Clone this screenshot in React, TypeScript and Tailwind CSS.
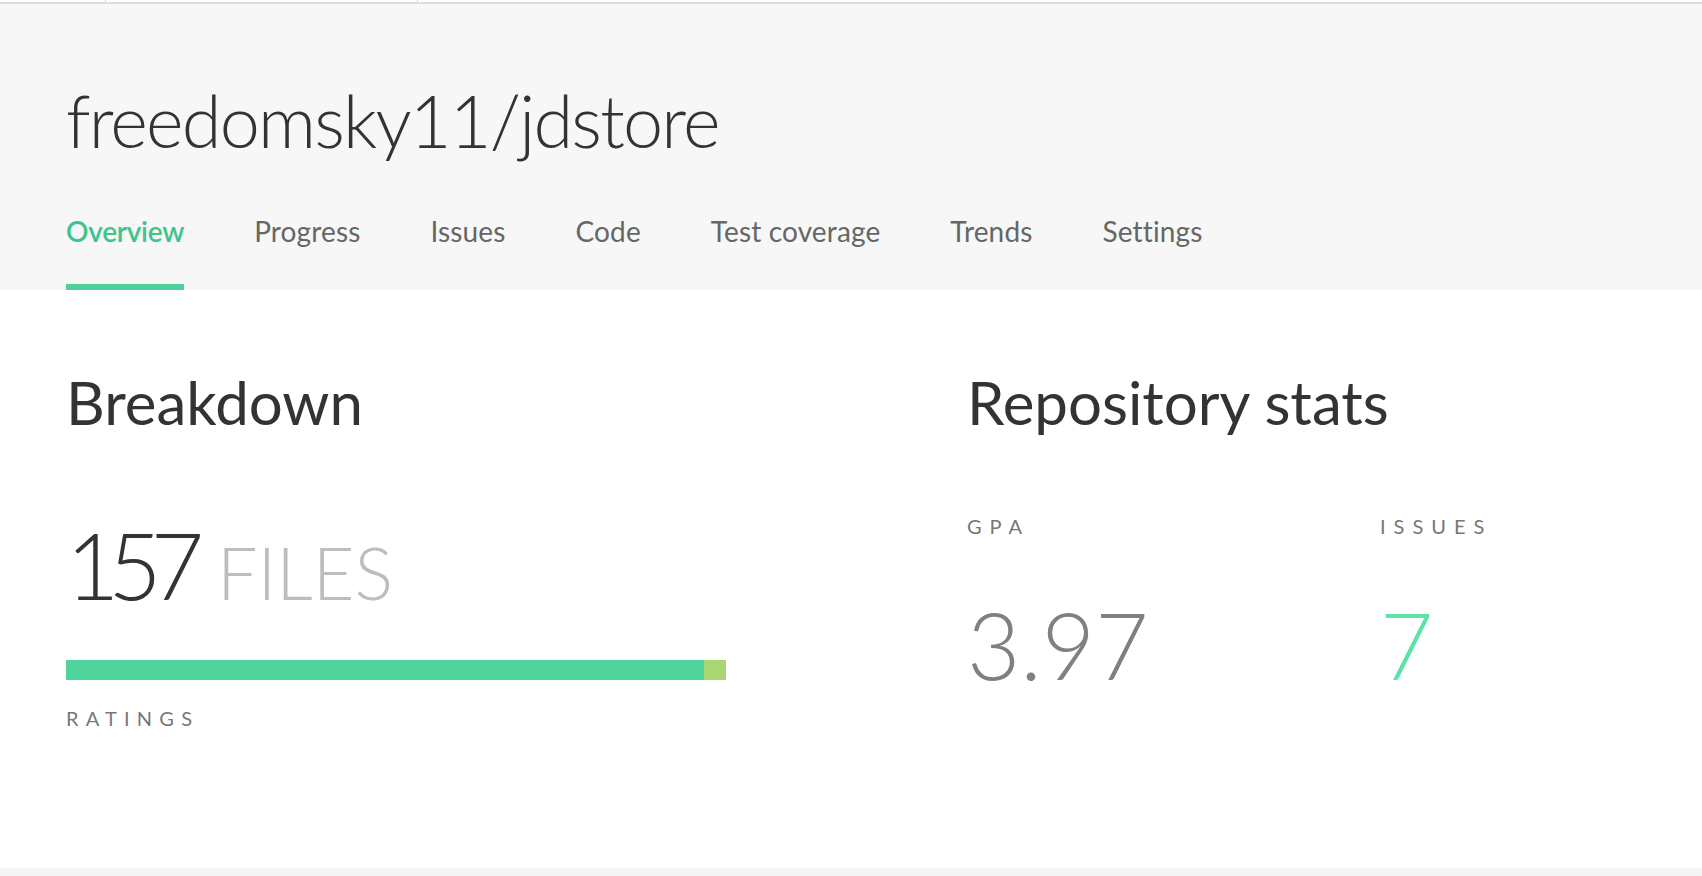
import React from 'react';

const tabs = ['Overview', 'Progress', 'Issues', 'Code', 'Test coverage', 'Trends', 'Settings'];

export default function App() {
  const active = 'Overview';

  return (
    <div className="min-h-[876px] bg-[#f5f5f5] font-['Lato','Open_Sans',sans-serif]">
      {/* browser remnant at the very top */}
      <div className="flex h-[2px] bg-white">
        <div className="w-[105px]" />
        <div className="w-px bg-[#d6d6d6]" />
        <div className="w-[311px]" />
        <div className="w-px bg-[#d6d6d6]" />
      </div>
      <div className="h-[2px] bg-[#dedede]" />

      {/* header */}
      <div className="bg-[#f7f7f7] px-[66px] pt-[80px]">
        <h1 className="text-[72px] leading-none font-light tracking-[-0.025em] text-[#333333]">
          freedomsky11/jdstore
        </h1>
        <nav className="mt-[61px] flex gap-[70px]">
          {tabs.map((t) => (
            <div key={t} className="flex flex-col">
              <span
                className={
                  t === active
                    ? 'text-[28px] leading-none font-semibold tracking-[-0.01em] text-[#41c48b]'
                    : 'text-[28px] leading-none tracking-[0.005em] text-[#666666]'
                }
              >
                {t}
              </span>
              <div className={t === active ? 'mt-[39px] h-[6px] bg-[#4dd09a]' : 'mt-[39px] h-[6px]'} />
            </div>
          ))}
        </nav>
      </div>

      {/* body */}
      <div className="bg-white h-[578px] px-[66px] pt-[82px] flex">
        <div className="w-[901px] flex flex-col">
          <h2 className="text-[60px] leading-none text-[#333333]">Breakdown</h2>
          <div className="mt-[87px] flex items-baseline">
            <span className="text-[92px] leading-none font-light tracking-[-0.12em] text-[#333333]">157</span>
            <span className="ml-[24px] text-[72px] leading-none font-light text-[#bdbdbd]">FILES</span>
          </div>
          <div className="mt-[49px] flex h-[20px] w-[660px]">
            <div className="w-[638px] bg-[#4ed39a]" />
            <div className="flex-1 bg-[#a8d673]" />
          </div>
          <div className="mt-[28px] text-[20px] leading-none tracking-[0.36em] text-[#777777]">RATINGS</div>
        </div>

        <div className="flex-1 flex flex-col">
          <h2 className="text-[60px] leading-none text-[#333333]">Repository stats</h2>
          <div className="mt-[84px] flex">
            <div className="w-[413px] flex flex-col">
              <span className="text-[20px] leading-none tracking-[0.4em] text-[#777777]">GPA</span>
              <span className="mt-[63px] text-[92px] leading-none font-light text-[#808080]">3.97</span>
            </div>
            <div className="flex flex-col">
              <span className="text-[20px] leading-none tracking-[0.4em] text-[#777777]">ISSUES</span>
              <span className="mt-[63px] text-[92px] leading-none font-light text-[#5de3a9]">7</span>
            </div>
          </div>
        </div>
      </div>
    </div>
  );
}
